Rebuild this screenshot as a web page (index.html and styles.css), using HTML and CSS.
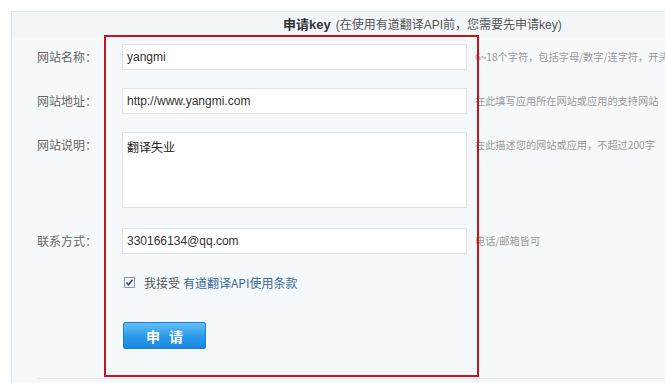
FILE: index.html
```html
<!DOCTYPE html>
<html lang="zh-CN">
<head>
<meta charset="utf-8">
<title>申请key</title>
<link rel="stylesheet" href="styles.css">
</head>
<body>
<div class="page">
  <div class="panel">
    <div class="head"><b class="head-title">申请key</b><span class="head-note">(在使用有道翻译API前，您需要先申请key)</span></div>
    <form class="form">
      <div class="row">
        <label class="label">网站名称：</label>
        <input class="field" type="text" value="yangmi">
        <span class="hint">6~18个字符，包括字母/数字/连字符，开头必须为字母</span>
      </div>
      <div class="row">
        <label class="label">网站地址：</label>
        <input class="field" type="text" value="http://www.yangmi.com">
        <span class="hint">在此填写应用所在网站或应用的支持网站</span>
      </div>
      <div class="row row-tall">
        <label class="label">网站说明：</label>
        <textarea class="field area">翻译失业</textarea>
        <span class="hint">在此描述您的网站或应用，不超过200字</span>
      </div>
      <div class="row">
        <label class="label">联系方式：</label>
        <input class="field" type="text" value="330166134@qq.com">
        <span class="hint">电话/邮箱皆可</span>
      </div>
      <div class="agree">
        <svg class="check" width="11" height="11" viewBox="0 0 11 11"><rect x="0.5" y="0.5" width="10" height="10" fill="#f4f6f9" stroke="#8a9bb3"/><path d="M2.5 5.5 L4.5 7.8 L8.5 2.8" fill="none" stroke="#2a3f8f" stroke-width="1.5"/></svg>
        <span class="agree-text">我接受</span>
        <a class="agree-link">有道翻译API使用条款</a>
      </div>
      <div class="actions"><button class="btn" type="button">申 请</button></div>
    </form>
    <div class="rule"></div>
  </div>
  <div class="annot"></div>
</div>
</body>
</html>
```
FILE: styles.css
```css
html, body {
  margin: 0;
  padding: 0;
  background: #fff;
  overflow: hidden;
}
body {
  width: 665px;
  height: 383px;
  font-family: "Liberation Sans", "Noto Sans CJK SC", sans-serif;
  font-size: 12px;
  color: #333;
}
.page {
  position: relative;
  width: 665px;
  height: 383px;
  padding: 11px 0 0 11px;
  box-sizing: border-box;
  overflow: hidden;
}
.panel {
  height: 372px;
  border-top: 1px solid #dfe4e9;
  border-left: 1px solid #dfe4e9;
  background: #f6f9fb;
  box-sizing: border-box;
  overflow: hidden;
}
.head {
  height: 26px;
  line-height: 26px;
  padding-left: 271px;
  background: #f3f6f9;
  white-space: nowrap;
  font-size: 13px;
}
.head-title {
  color: #333;
  font-weight: bold;
}
.head-note {
  color: #555;
  margin-left: 5px;
  font-size: 12px;
}
.form {
  margin: 0;
  padding: 6px 0 0 25px;
}
.row {
  display: flex;
  align-items: flex-start;
  margin-bottom: 18px;
  white-space: nowrap;
}
.row-tall {
  margin-bottom: 20px;
}
.label {
  width: 85px;
  flex: none;
  line-height: 26px;
  color: #666;
  font-size: 12px;
  font-family: "Noto Sans CJK SC", sans-serif;
}
.field {
  flex: none;
  width: 345px;
  height: 26px;
  box-sizing: border-box;
  border: 1px solid #e0e4e8;
  background: #fff;
  padding: 0 4px;
  margin: 0;
  font-family: "Liberation Sans", "Noto Sans CJK SC", sans-serif;
  font-size: 12px;
  color: #333;
  outline: none;
}
.area {
  height: 76px;
  padding: 5px 4px;
  resize: none;
  font-family: "Noto Sans CJK SC", sans-serif;
  font-size: 12px;
  color: #222;
  line-height: 18px;
}
.hint {
  flex: 1 1 auto;
  min-width: 0;
  overflow: hidden;
  margin-left: 8px;
  line-height: 26px;
  color: #999;
  font-size: 10.2px;
  font-family: "Noto Sans CJK SC", sans-serif;
}
.agree {
  display: flex;
  align-items: center;
  height: 20px;
  margin: 18px 0 0 87px;
  white-space: nowrap;
  font-family: "Noto Sans CJK SC", sans-serif;
  font-size: 12px;
}
.check {
  flex: none;
  margin-right: 9px;
}
.agree-text {
  color: #555;
  margin-right: 3px;
}
.agree-link {
  color: #36699a;
}
.actions {
  margin: 30px 0 0 86px;
}
.btn {
  display: block;
  width: 83px;
  height: 27px;
  padding: 0;
  border: 1px solid #1f7fd4;
  border-radius: 2px;
  background: linear-gradient(#62c0f8, #2b97ea 55%, #1b86e0);
  color: #fff;
  font-family: "Noto Sans CJK SC", sans-serif;
  font-size: 14px;
  font-weight: bold;
  letter-spacing: 3px;
  text-indent: 3px;
}
.rule {
  margin: 29px 0 0 25px;
  height: 1px;
  background: #e3e7eb;
}
.annot {
  position: absolute;
  left: 104px;
  top: 35px;
  width: 375px;
  height: 342px;
  box-sizing: border-box;
  border: 2px solid #c4161c;
  pointer-events: none;
}
```
